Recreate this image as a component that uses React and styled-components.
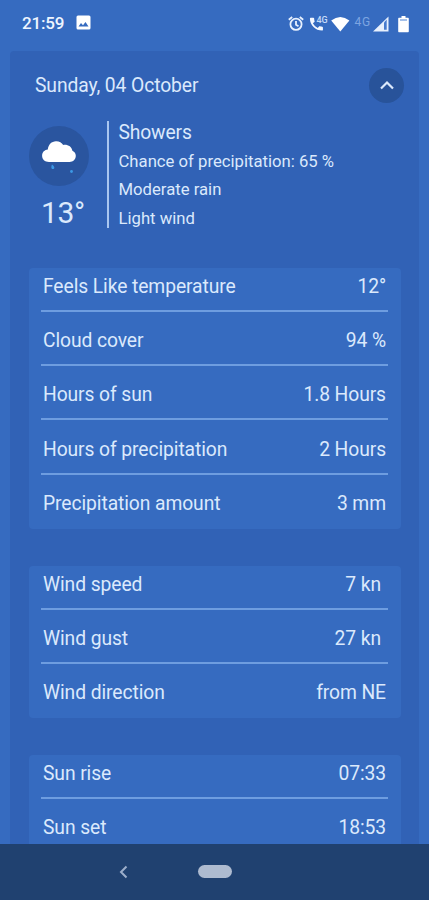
import React from 'react';
import styled, { createGlobalStyle } from 'styled-components';

const Global = createGlobalStyle`
  * { box-sizing: border-box; }
  body { margin: 0; background: #366bc0; }
`;

const Screen = styled.div`
  width: 429px;
  height: 900px;
  display: flex;
  flex-direction: column;
  overflow: hidden;
  background: #366bc0;
  color: #dbe9fc;
  font-family: Roboto, sans-serif;
`;

const StatusBar = styled.header`
  flex: none;
  height: 51px;
  padding: 0 20px 6px 22px;
  display: flex;
  align-items: center;
  justify-content: space-between;
`;

const StatusGroup = styled.div`
  display: flex;
  align-items: center;
`;

const Clock = styled.span`
  width: 54px;
  padding-top: 1px;
  font-size: 17px;
  letter-spacing: -0.15px;
  font-weight: 500;
  color: #eef5ff;
`;

const Icon = styled.svg`
  display: block;
  flex: none;
`;

const Forecast = styled.main`
  flex: 1;
  min-height: 0;
  margin: 0 10px;
  padding: 0 18px 0 19px;
  overflow: hidden;
  border-radius: 4px 4px 0 0;
  background: #3162b6;
`;

const DayHeader = styled.div`
  height: 69px;
  padding-left: 6px;
  margin-right: -3px;
  display: flex;
  align-items: center;
  justify-content: space-between;
`;

const Day = styled.h1`
  margin: 0;
  font-size: 19.3px;
  letter-spacing: -0.1px;
  font-weight: 400;
  line-height: 24px;
`;

const Collapse = styled.button`
  width: 35px;
  height: 35px;
  padding: 0;
  border: 0;
  border-radius: 50%;
  display: grid;
  place-items: center;
  background: #28539a;
`;

const Summary = styled.section`
  display: flex;
  height: 148px;
  align-items: flex-start;
`;

const Condition = styled.div`
  width: 78px;
  padding-top: 6px;
`;

const WeatherBadge = styled.div`
  width: 60px;
  height: 60px;
  border-radius: 50%;
  background: #2a559f;
`;

const Temperature = styled.div`
  padding-left: 12px;
  margin-top: 9px;
  font-size: 30px;
  letter-spacing: -0.4px;
  line-height: 36px;
`;

const Details = styled.div`
  height: 107px;
  padding-left: 9.5px;
  margin-top: 1px;
  border-left: 2px solid #a9c6f0;
  white-space: nowrap;
`;

const Headline = styled.div`
  font-size: 19.3px;
  letter-spacing: -0.15px;
  line-height: 24px;
  margin-bottom: 3px;
`;

const Detail = styled.div`
  font-size: 16.7px;
  line-height: 28.4px;
`;

const Panel = styled.section`
  height: ${({ $height }) => $height}px;
  margin-bottom: 37px;
  padding: 0 13px 0 12px;
  border-radius: 4px;
  background: #366bc0;
`;

const Row = styled.div`
  height: ${({ $first }) => ($first ? 43.5 : 54.35)}px;
  padding: 0 2px 12px;
  display: flex;
  align-items: flex-end;
  justify-content: space-between;
  border-bottom: 2px solid ${({ $last }) => ($last ? 'transparent' : '#6e9de0')};
  font-size: 19.3px;
  letter-spacing: -0.09px;
  line-height: 22px;
  white-space: nowrap;
`;

const Value = styled.span`
  padding-right: ${({ $inset }) => ($inset ? 5 : 0)}px;
`;

const NavBar = styled.nav`
  flex: none;
  height: 56.5px;
  display: flex;
  align-items: center;
  padding-left: 118px;
  background: #204170;
`;

const HomePill = styled.span`
  width: 34px;
  height: 13px;
  margin-left: 70px;
  border-radius: 7px;
  background: #aebbd0;
`;

const panels = [
  {
    height: 261,
    rows: [
      ['Feels Like temperature', '12°'],
      ['Cloud cover', '94 %'],
      ['Hours of sun', '1.8 Hours'],
      ['Hours of precipitation', '2 Hours'],
      ['Precipitation amount', '3 mm'],
    ],
  },
  {
    height: 152,
    rows: [
      ['Wind speed', '7 kn', true],
      ['Wind gust', '27 kn', true],
      ['Wind direction', 'from NE'],
    ],
  },
  {
    height: 152,
    rows: [
      ['Sun rise', '07:33'],
      ['Sun set', '18:53'],
    ],
  },
];

const PhotoIcon = () => (
  <Icon width="15" height="15" viewBox="0 0 15 15">
    <rect x="0.5" y="0.5" width="14" height="14" rx="1.5" fill="#fff" />
    <path d="M2.5 11.5 5 8l2 2.3L9.5 7l3 4.5z" fill="#366bc0" />
  </Icon>
);

const StatusIcons = () => (
  <Icon width="124" height="22" viewBox="0 0 124 22" fill="none">
    <g stroke="#e8f1fe" strokeWidth="1.8">
      <circle cx="11" cy="12.3" r="5.6" />
      <path d="M11 9v3.800l2.500 1.500M3.800 7.800 7.200 5M18.200 7.800 14.800 5" />
    </g>
    <path
      transform="translate(24 4.700) scale(.77)"
      fill="#f4f8ff"
      d="M17.500 13c-1.200 0-2.400-.2-3.500-.6-.4-.1-.8 0-1 .3l-1.600 2A15 15 0 0 1 5 8.400l2-1.600c.3-.3.4-.7.3-1A11 11 0 0 1 6.700 2.200c0-.5-.4-.9-1-.9H2.400c-.6 0-1.200.2-1.200 1C1.200 11 8.500 18 17.100 18c.7 0 1-.6 1-1.100V14c0-.5-.4-1-1-1z"
    />
    <text x="31.500" y="10.900" fill="#c6dbf8" fontFamily="Roboto" fontSize="9" fontWeight="500">4G</text>
    <path d="M46.200 8.500Q55.300 1.500 64.400 8.500L55.300 19.500z" fill="#fff" />
    <text x="69.500" y="14.200" fill="#7da5e1" fontFamily="Roboto" fontSize="12" letterSpacing=".7">4G</text>
    <path d="M88 19.500 103.500 4.500V19.500z" fill="#e7f0fd" />
    <path d="M99 10.500 101.700 7.500V17.700H99z" fill="#477bce" />
    <path d="M116.500 4h4v1.800h2.300c.6 0 1 .4 1 1v12.400c0 .6-.4 1-1 1h-8.600c-.6 0-1-.4-1-1V6.800c0-.6.4-1 1-1h2.300z" fill="#fff" />
    <path d="M115 8h7" stroke="#8eb1e5" strokeWidth="1.600" />
  </Icon>
);

const Showers = () => (
  <Icon width="60" height="60" viewBox="0 0 60 60">
    <path
      d="M20 36C15.800 36 13.100 33.200 13.100 29.800c0-3.500 2.600-6 5.700-6.200C19.300 18.500 22.600 15.500 27 15.300c3.300-.1 5.700 1.400 7.200 3.600 4.600-.7 8.500 1.700 9.200 5.800 2.200 1 3.400 2.900 3.400 5.100 0 3.500-2.700 6.200-6.300 6.200z"
      fill="#fff"
    />
    <path d="M23 38.500c2.800 1.700 3 4.500 1 4.600-2 0-2-2.300-1-4.600z" fill="#3c99e5" />
    <circle cx="42.500" cy="45.500" r="1.400" fill="#3c99e5" />
  </Icon>
);

export default function App() {
  return (
    <Screen>
      <Global />
      <StatusBar>
        <StatusGroup>
          <Clock>21:59</Clock>
          <PhotoIcon />
        </StatusGroup>
        <StatusIcons />
      </StatusBar>
      <Forecast>
        <DayHeader>
          <Day>Sunday, 04 October</Day>
          <Collapse aria-label="Collapse">
            <Icon width="16" height="12" viewBox="0 0 16 12" fill="none" stroke="#dbe9fc" strokeWidth="2.200">
              <path d="M2 8.500 8 2.500l6 6" />
            </Icon>
          </Collapse>
        </DayHeader>
        <Summary>
          <Condition>
            <WeatherBadge>
              <Showers />
            </WeatherBadge>
            <Temperature>13°</Temperature>
          </Condition>
          <Details>
            <Headline>Showers</Headline>
            <Detail>Chance of precipitation: 65 %</Detail>
            <Detail>Moderate rain</Detail>
            <Detail>Light wind</Detail>
          </Details>
        </Summary>
        {panels.map(({ height, rows }) => (
          <Panel key={rows[0][0]} $height={height}>
            {rows.map(([label, value, inset], i) => (
              <Row key={label} $first={i === 0} $last={i === rows.length - 1}>
                <span>{label}</span>
                <Value $inset={inset}>{value}</Value>
              </Row>
            ))}
          </Panel>
        ))}
      </Forecast>
      <NavBar>
        <Icon width="10" height="14" viewBox="0 0 10 14" fill="none" stroke="#9dafcb" strokeWidth="2">
          <path d="M8.500 1.500 3 7l5.500 5.500" />
        </Icon>
        <HomePill />
      </NavBar>
    </Screen>
  );
}
